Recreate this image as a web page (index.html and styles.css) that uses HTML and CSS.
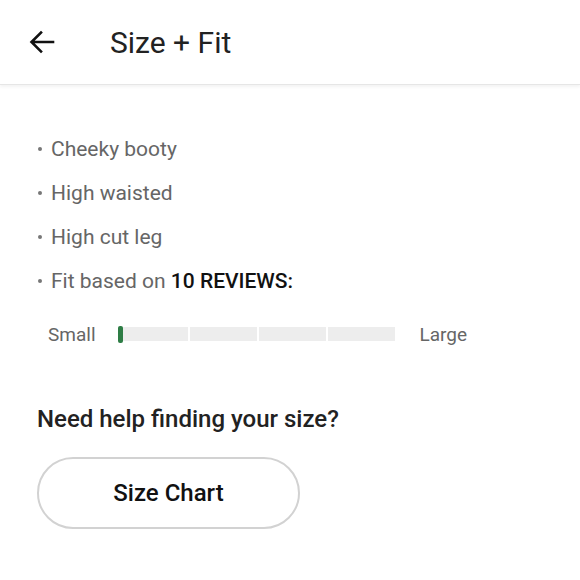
FILE: index.html
```html
<!DOCTYPE html>
<html lang="en">
<head>
  <meta charset="UTF-8" />
  <meta name="viewport" content="width=device-width, initial-scale=1.0"/>
  <title>Size + Fit</title>
  <link rel="stylesheet" href="styles.css">
</head>
<body>
<header class="topbar">
  <button class="back" aria-label="Back">
    <svg width="26" height="24" viewBox="0 0 26 24">
      <path d="M24 12 H3 M12 2.5 L2.5 12 L12 21.5" fill="none" stroke="#111" stroke-width="2.6" stroke-linecap="square"/>
    </svg>
  </button>
  <h1 class="title">Size + Fit</h1>
</header>
<main class="content">
  <ul class="features">
    <li>Cheeky booty</li>
    <li>High waisted</li>
    <li>High cut leg</li>
    <li>Fit based on&nbsp;<strong>10 REVIEWS:</strong></li>
  </ul>
  <div class="fit-scale">
    <span class="fit-label">Small</span>
    <div class="fit-bar">
      <span class="seg"></span>
      <span class="seg"></span>
      <span class="seg"></span>
      <span class="seg"></span>
      <span class="marker" style="left: 0%;"></span>
    </div>
    <span class="fit-label">Large</span>
  </div>
  <h2 class="help">Need help finding your size?</h2>
  <button class="chart-btn">Size Chart</button>
</main>
</body>
</html>
```

FILE: styles.css
```css
body {
  margin: 0;
  font-family: Roboto, "Noto Sans", sans-serif;
  background: #fff;
  color: #222;
}
.topbar {
  height: 84px;
  display: flex;
  align-items: center;
  padding-left: 29px;
  border-bottom: 1px solid #e6e6e6;
  box-shadow: 0 2px 3px rgba(0,0,0,0.05);
}
.back {
  background: none;
  border: none;
  padding: 0;
  width: 26px;
  height: 24px;
  display: flex;
  margin-top: -1px;
}
.title {
  margin: 1px 0 0 55px;
  font-size: 30px;
  font-weight: 400;
  color: #222;
}
.content {
  padding: 0 37px;
}
.features {
  list-style: none;
  margin: 42px 0 0;
  padding: 0;
}
.features li {
  height: 44px;
  line-height: 44px;
  font-size: 21px;
  color: #666;
  display: flex;
  align-items: center;
}
.features li::before {
  content: "";
  width: 4px;
  height: 4px;
  border-radius: 50%;
  background: #777;
  margin: 0 9px 0 1px;
}
.features strong {
  font-weight: 500;
  color: #111;
}
.fit-scale {
  display: flex;
  align-items: center;
  margin: 11px 0 0 11px;
  height: 40px;
}
.fit-label {
  font-size: 19px;
  color: #666;
}
.fit-bar {
  position: relative;
  display: flex;
  gap: 2px;
  width: 277px;
  height: 14px;
  margin: 0 25px 0 22px;
}
.seg {
  flex: 1;
  background: #ededed;
}
.seg:first-of-type {
  flex: 1.06;
}
.seg:last-of-type {
  border-radius: 0 7px 7px 0;
}
.marker {
  position: absolute;
  top: -1px;
  width: 5px;
  height: 17px;
  border-radius: 2px;
  background: #2e7d45;
}
.help {
  margin: 51px 0 0;
  font-size: 24px;
  font-weight: 500;
  color: #222;
}
.chart-btn {
  margin-top: 24px;
  width: 263px;
  height: 72px;
  border: 2px solid #d2d2d2;
  border-radius: 36px;
  background: #fff;
  font-family: Roboto, "Noto Sans", sans-serif;
  font-size: 24px;
  font-weight: 500;
  color: #111;
}
```
